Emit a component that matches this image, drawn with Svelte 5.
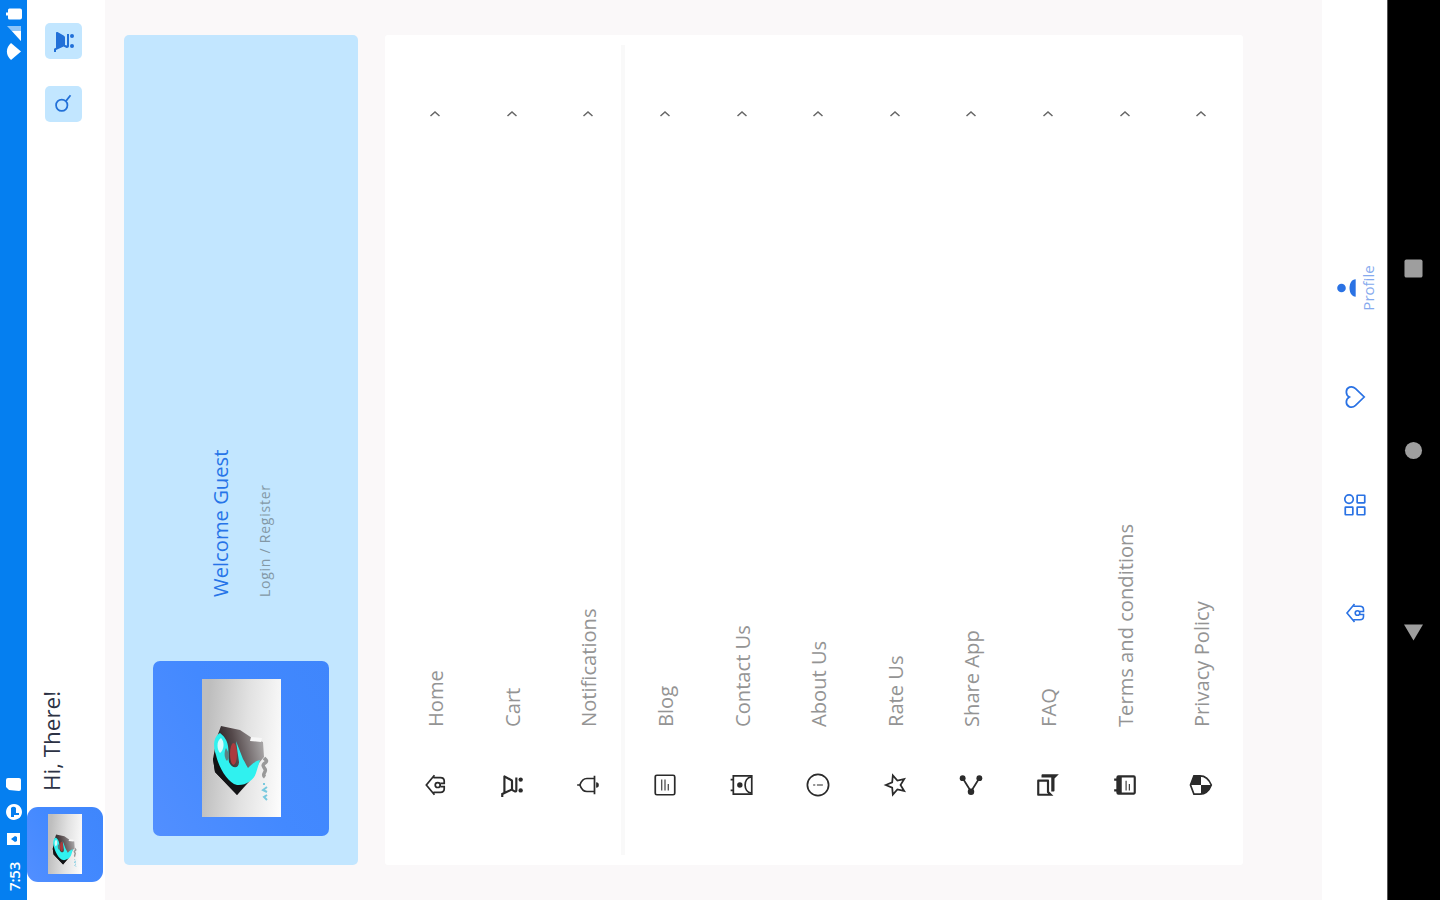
<!--
  Profile screen of the shop app. The device is laid out upright (900x1440)
  and turned a quarter to the left, so everything inside uses normal flow.
-->
<script lang="ts">
    type Item = { label: string; icon: string; last?: boolean };

    const menu: Item[] = [
        { label: "Home", icon: "home" },
        { label: "Cart", icon: "cart" },
        { label: "Notifications", icon: "bell", last: true },
        { label: "Blog", icon: "article" },
        { label: "Contact Us", icon: "contact" },
        { label: "About Us", icon: "info" },
        { label: "Rate Us", icon: "star" },
        { label: "Share App", icon: "share" },
        { label: "FAQ", icon: "faq" },
        { label: "Terms and conditions", icon: "terms" },
        { label: "Privacy Policy", icon: "shield" },
    ];
</script>

{#snippet logo()}
    <svg class="logo" viewBox="0 0 138 79" preserveAspectRatio="none" aria-hidden="true">
        <defs>
            <linearGradient id="plate" x1="0.1" y1="1" x2="0.25" y2="0">
                <stop offset="0" stop-color="#fdfdfd" />
                <stop offset="0.5" stop-color="#e2e2e2" />
                <stop offset="1" stop-color="#bebebe" />
            </linearGradient>
            <linearGradient id="body" x1="0.3" y1="0" x2="0.6" y2="1">
                <stop offset="0" stop-color="#0c0c0e" />
                <stop offset="0.5" stop-color="#54484a" />
                <stop offset="1" stop-color="#a5a3a4" />
            </linearGradient>
        </defs>
        <rect width="138" height="79" fill="url(#plate)" />
        <path d="M91 19 87 38 79 50 75 61 60 62 54 57 35 47 22 35 45 13 58 11 80 15Z" fill="url(#body)" />
        <path d="M22 35 45 13 58 11 63 15 43 24 35 35 41 51Z" fill="#121315" />
        <path d="M84 18C80 11 70 11 62 14 52 16 34 25 32 35 31 43 37 52 44 54L57 58C56 53 53 50 49 46 52 44 55 43 58 41L76 34 55 37C48 37 48 30 55 27 61 26 65 27 71 26 77 25 81 22 84 18Z" fill="#30f1ef" />
        <path d="M79 19C76 14 67 15 64 18 67 22 75 23 79 19Z" fill="#d5fbfb" />
        <path d="M56 25C59 22 65 22 69 24 64 27 60 28 56 25Z" fill="#5c8184" />
        <ellipse cx="63" cy="31.500" rx="11" ry="3.500" fill="#ab3b3e" />
        <path d="M76 48 80 49 79 60 75 59Z" fill="#f7f7f7" />
        <path d="M40 63c3-4 5 2 8 0s4-3 6 0 3 1 5-1" fill="none" stroke="#999" stroke-width="3.5" />
        <path d="M17 65l3-3 2 3m3 0 2-4 3 4m2-3h2" fill="none" stroke="#79c9de" stroke-width="2" />
    </svg>
{/snippet}

{#snippet icon(name: string)}
    <svg class="icon" viewBox="0 0 24 24" aria-hidden="true">
        {#if name === "home"}
            <path class="line" d="m3 11.500 9-7.500 9 7.500M5.200 10.500V17c0 2 1 3.500 3.300 3.500h2V17M18.800 10.500V17c0 2-1 3.500-3.300 3.500h-2V17" />
            <circle class="line" cx="12" cy="14.500" r="2.300" />
        {:else if name === "cart"}
            <path d="M15.550 13c.75 0 1.410-.410 1.750-1.030l3.580-6.490A1 1 0 0 0 20.010 4H5.210l-.94-2H1v2h2l3.600 7.590-1.350 2.440C4.520 15.370 5.480 17 7 17h12v-2H7l1.100-2h7.450zM6.160 6h12.150l-2.760 5H8.530L6.160 6z" />
            <circle cx="7" cy="20" r="2" />
            <circle cx="17" cy="20" r="2" />
        {:else if name === "cart-filled"}
            <path d="M1 2v2h2l3.600 7.600-1.350 2.450C4.520 15.400 5.480 17 7 17h12v-2H7.400l.7-2h7.450c.75 0 1.400-.4 1.750-1l3.600-6.500A1 1 0 0 0 20 4H5.200l-.94-2z" />
            <circle cx="7" cy="20" r="2" />
            <circle cx="17" cy="20" r="2" />
        {:else if name === "bell"}
            <path class="line" d="M3.500 18h17M6 18v-7c0-3.200 2.300-5.200 6-6.500 3.700 1.300 6 3.300 6 6.500v7M12 2v3" />
            <path d="M9.500 19.500h5a2.500 2.500 0 0 1-5 0z" />
        {:else if name === "article"}
            <rect class="line" x="3" y="3" width="18" height="18" rx="1.5" />
            <path class="line thin" d="M7 9h10M7 12h10M7 15h6" />
        {:else if name === "contact"}
            <path class="line" d="M7 1.500V4M17 1.500V4M3.500 4h17v17h-17z" />
            <circle cx="12" cy="10" r="2.500" />
            <path class="line" d="M4.500 20.500c1-7.500 14-7.500 15 0" />
        {:else if name === "info"}
            <circle class="line" cx="12" cy="12" r="9.8" />
            <path class="line thin" d="M12 7.500v2M12 11v5.500" />
        {:else if name === "star"}
            <path class="line" d="m12 3.500 2.500 5.900 6.400.6-4.800 4.200 1.400 6.300-5.500-3.400-5.500 3.400 1.400-6.300L3.100 10l6.400-.6z" />
        {:else if name === "share"}
            <path class="line" d="m18 4.500-12 7.500 12 7.500" />
            <circle cx="18.300" cy="4.300" r="2.700" />
            <circle cx="5.700" cy="12" r="3" />
            <circle cx="18.300" cy="19.700" r="2.700" />
        {:else if name === "faq"}
            <path d="M15 4v7H5.170L4 12.170V4h11m1-2H3c-.55 0-1 .45-1 1v14l4-4h10c.55 0 1-.45 1-1V3c0-.55-.45-1-1-1zm5 4h-2v9H6v2c0 .55.45 1 1 1h11l4 4V7c0-.55-.45-1-1-1z" />
        {:else if name === "terms"}
            <path d="M19 4h-1V2h-2v2H8V2H6v2H5a2 2 0 0 0-2 2v14c0 1.100.9 2 2 2h14a2 2 0 0 0 2-2V6a2 2 0 0 0-2-2zm0 16H5V9h14v11z" />
            <path class="line thin" d="M7 13h9M7 16h6" />
        {:else if name === "shield"}
            <path class="line" d="M12 2.300 20.500 5.500V11c0 5-3.300 8.500-8.500 10.500C6.800 19.500 3.500 16 3.500 11V5.500z" />
            <path d="M12 2v10h8.500V5.300zM3.500 12H12v9.500C7 20 4 16.500 3.500 12z" />
        {:else if name === "heart"}
            <path class="line" d="M12 20.500 4.200 12.500C1 9 3 4 7.300 4c2 0 3.700 1 4.700 2.800C13 5 14.700 4 16.700 4 21 4 23 9 19.800 12.500z" />
        {:else if name === "grid"}
            <rect class="line" x="3" y="3" width="7" height="7" rx=".5" />
            <rect class="line" x="3" y="14" width="7" height="7" rx=".5" />
            <rect class="line" x="14" y="14" width="7" height="7" rx=".5" />
            <circle class="line" cx="17.500" cy="6.500" r="3.900" />
        {:else if name === "search"}
            <circle class="line" cx="10" cy="10" r="6.500" />
            <path class="line" d="m15 15 6.500 5" />
        {:else if name === "person"}
            <circle cx="12" cy="6" r="4.700" />
            <path d="M2.500 21.500c0-9 19-9 19 0z" />
        {/if}
    </svg>
{/snippet}

<div class="stage">
    <div class="device">
        <div class="status">
            <span class="time">7:53</span>
            <svg class="notes" viewBox="0 0 70 16" aria-hidden="true">
                <path fill-rule="evenodd" d="M1 1h12v13H1zM4 9l3-4 3 4-1 2H5z" />
                <path fill-rule="evenodd" d="M34 0a8 8 0 1 0 .1 0zM29 5h9a3 3 0 0 1 0 5h-5v3h-2V8h-2z" />
                <path d="M56 3l3-3h7a2 2 0 0 1 2 2v11a2 2 0 0 1-2 2H57a2 2 0 0 1-2-2z" />
            </svg>
            <svg class="signals" viewBox="0 0 52 16" aria-hidden="true">
                <path d="M0 5C5-.5 12-.5 17 5L8.500 15z" />
                <path d="M19 15 34 1v14z" fill-opacity="0.55" />
                <path d="M19 15 29 6v9z" />
                <path d="M42 2h2.500V0h3v2H50a1.500 1.500 0 0 1 1.500 1.500V14a2 2 0 0 1-2 2h-7a2 2 0 0 1-2-2V3.500A1.500 1.500 0 0 1 42 2z" />
            </svg>
        </div>

        <header class="top">
            <div class="avatar small">{@render logo()}</div>
            <h1>Hi, There!</h1>
            <button class="square search" aria-label="Search">{@render icon("search")}</button>
            <button class="square" aria-label="Cart">{@render icon("cart-filled")}</button>
        </header>

        <main class="page">
            <section class="guest">
                <div class="avatar">{@render logo()}</div>
                <div class="who">
                    <strong>Welcome Guest</strong>
                    <span>Login / Register</span>
                </div>
            </section>

            <ul class="menu">
                {#each menu as item}
                    <li class:divided={item.last}>
                        {@render icon(item.icon)}
                        <span class="label">{item.label}</span>
                        <svg class="chevron" viewBox="0 0 8 12" aria-hidden="true">
                            <path d="m2 1.500 4 4.500-4 4.500" />
                        </svg>
                    </li>
                {/each}
            </ul>
        </main>

        <nav class="tabs">
            <span class="tab home">{@render icon("home")}</span>
            <span class="tab">{@render icon("grid")}</span>
            <span class="tab">{@render icon("heart")}</span>
            <span class="tab current">{@render icon("person")}<em>Profile</em></span>
        </nav>

        <div class="system">
            <svg viewBox="0 0 20 20" aria-hidden="true"><path d="M18.500 0v20L1.500 10z" /></svg>
            <svg viewBox="0 0 20 20" aria-hidden="true"><circle cx="10" cy="10" r="9" /></svg>
            <svg viewBox="0 0 20 20" aria-hidden="true"><rect x=".5" y=".5" width="19" height="19" rx="2" /></svg>
        </div>
    </div>
</div>

<style>
    :global(body) {
        margin: 0;
        overflow: hidden;
    }
    .stage {
        width: 1440px;
        height: 900px;
        overflow: hidden;
    }
    .device {
        --blue: #2a72e4;
        --sky: #c2e6ff;

        display: flex;
        flex-direction: column;
        width: 900px;
        height: 1440px;
        transform: translateY(900px) rotate(-90deg);
        transform-origin: 0 0;
        background: #faf8f9;
        font-family: "Open Sans", "Noto Sans", sans-serif;
    }
    .device :global(*) {
        box-sizing: border-box;
    }
    .icon {
        display: block;
        width: 26px;
        height: 26px;
        flex: none;
        fill: currentColor;
    }
    .icon .line {
        fill: none;
        stroke: currentColor;
        stroke-width: 1.6;
    }
    .icon .thin {
        stroke-width: 1;
    }

    /* status bar */
    .status {
        display: flex;
        align-items: center;
        height: 27px;
        flex: none;
        padding: 0 8px 0 9px;
        background: #057ff0;
        color: #fff;
    }
    .status svg {
        height: 16px;
        fill: #fff;
    }
    .time {
        width: 45px;
        font-size: 15px;
        font-weight: 600;
        line-height: 20px;
        letter-spacing: -0.2px;
    }
    .notes {
        width: 70px;
    }
    .signals {
        width: 52px;
        margin-left: auto;
    }

    /* greeting */
    .top {
        display: flex;
        align-items: center;
        height: 78px;
        flex: none;
        padding: 0 23px 0 18px;
        background: #fff;
    }
    h1 {
        flex: 1;
        margin: 0 0 28px 16px;
        font-size: 22.4px;
        font-weight: 400;
        line-height: 30px;
        color: #2c3244;
    }
    .square {
        display: grid;
        place-items: center;
        width: 36px;
        height: 37px;
        margin: 0 0 5px 27px;
        padding: 0;
        border: 0;
        border-radius: 5px;
        background: var(--sky);
        color: #2270d8;
    }
    .square .icon {
        width: 24px;
        height: 24px;
    }
    .square.search .icon {
        width: 21px;
        height: 21px;
    }
    .square.search .line {
        stroke-width: 2;
    }
    .avatar {
        display: grid;
        place-items: center;
        width: 175px;
        height: 176px;
        flex: none;
        border-radius: 7px;
        background: linear-gradient(150deg, #528fff, #4389ff 50%, #3f86fc);
    }
    .avatar .logo {
        width: 138px;
        height: 79px;
    }
    .avatar.small {
        width: 75px;
        height: 76px;
        margin-top: -2px;
        border-radius: 11px;
    }
    .avatar.small .logo {
        width: 60px;
        height: 34px;
    }

    /* content */
    .page {
        display: flex;
        flex-direction: column;
        gap: 27px;
        flex: 1;
        padding: 19px 35px 0;
    }
    .guest {
        display: flex;
        align-items: center;
        gap: 64px;
        height: 234px;
        padding: 0 29px;
        border-radius: 5px;
        background: var(--sky);
    }
    .who {
        display: flex;
        flex-direction: column;
        gap: 21px;
        margin-top: -1px;
    }
    .who strong {
        font-size: 20.2px;
        font-weight: 400;
        line-height: 28px;
        color: #2674e8;
    }
    .who span {
        font-size: 14px;
        line-height: 20px;
        letter-spacing: 0.75px;
        color: #8398a6;
    }
    .menu {
        height: 858px;
        margin: 0;
        padding: 12px 10px 0;
        list-style: none;
        background: #fff;
        border-radius: 3px;
    }
    .menu li {
        display: flex;
        align-items: center;
        height: 76.6px;
        padding: 0 65px 0 57px;
        color: #2b2b2b;
    }
    .menu li.divided {
        background: linear-gradient(#f9f9f9, #f9f9f9) 0 calc(100% - 2px) / 100% 4px no-repeat;
    }
    .label {
        flex: 1;
        margin-left: 45px;
        font-size: 20.15px;
        color: #949494;
    }
    .chevron {
        width: 8px;
        height: 12px;
        fill: none;
        stroke: #666;
        stroke-width: 1.5;
    }

    /* bottom bars */
    .tabs {
        display: flex;
        justify-content: center;
        height: 65px;
        flex: none;
        padding-right: 2px;
        background: #fff;
        color: var(--blue);
    }
    .tab {
        display: flex;
        flex-direction: column;
        align-items: center;
        justify-content: center;
        width: 108px;
    }
    .tab.home .icon {
        width: 24px;
        height: 24px;
    }
    .tab.current {
        padding: 5px 0 0 2px;
    }
    .tab.current .icon {
        width: 22px;
        height: 22px;
    }
    .tab em {
        font-size: 15px;
        font-style: normal;
        line-height: 20px;
        color: #86aaee;
    }
    .system {
        display: flex;
        align-items: center;
        justify-content: center;
        gap: 163px;
        height: 53px;
        flex: none;
        padding: 0 1px 1px 0;
        border-top: 1px solid #555;
        background: #000;
    }
    .system svg {
        width: 19px;
        height: 19px;
        fill: #9e9e9e;
    }
</style>
